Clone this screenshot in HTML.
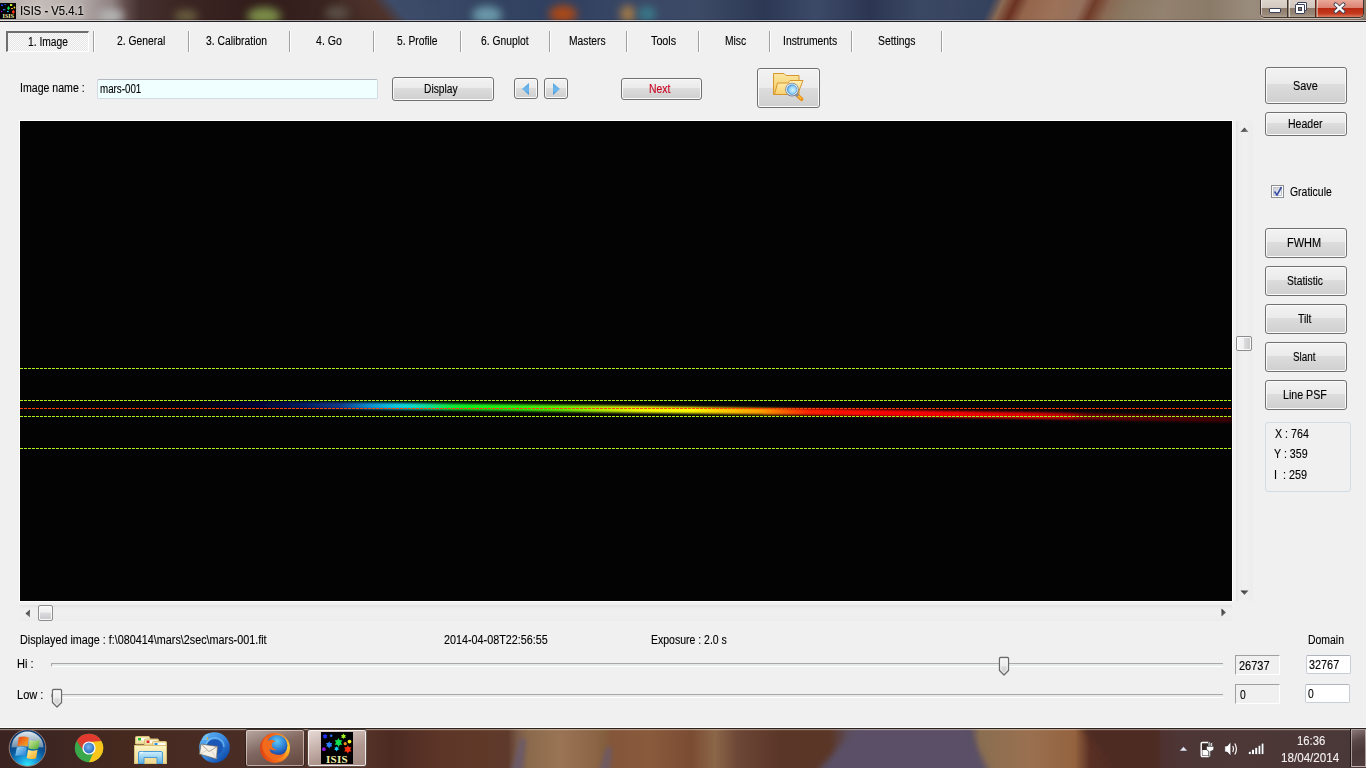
<!DOCTYPE html>
<html><head><meta charset="utf-8"><style>
*{margin:0;padding:0;box-sizing:border-box}
html,body{width:1366px;height:768px;overflow:hidden}
body{background:#f0f0f0;position:relative;font-family:"Liberation Sans",sans-serif;font-size:11.5px;color:#000}
.a{position:absolute}
.t{position:absolute;white-space:nowrap;line-height:14px;transform-origin:0 0;-webkit-text-stroke:0.12px currentColor}
.btn{position:absolute;border:1px solid #707070;border-radius:3px;background:linear-gradient(#f2f2f2 0%,#ebebeb 45%,#dddddd 45%,#cfcfcf 100%);box-shadow:inset 0 0 0 1px #fbfbfb}
.sep{position:absolute;top:31px;width:2px;height:21px;border-left:1px solid #a0a0a0;border-right:1px solid #fff}
.dash{position:absolute;left:20px;width:1212px;height:1px}
.g{background:repeating-linear-gradient(90deg,#a8f020 0,#a8f020 3px,transparent 3px,transparent 4px)}
.r{background:repeating-linear-gradient(90deg,#ff4500 0,#ff4500 3px,transparent 3px,transparent 4px)}
.blob{position:absolute;border-radius:50%;filter:blur(4px)}
</style></head><body>

<!-- ===== title bar ===== -->
<div class="a" style="left:0;top:0;width:1366px;height:21px;overflow:hidden;background:linear-gradient(90deg,#b4aca8 0px,#c4bcb8 40px,#b4acaa 80px,#8e8080 112px,#604c4a 126px,#44302e 140px,#3c2624 180px,#301c1a 260px,#3a2420 330px,#50342c 375px,#503a3e 392px,#3c4c6a 405px,#344462 480px,#304060 560px,#3a4866 640px,#3c4a66 700px,#2c3854 765px,#3c4a68 815px,#2c3652 870px,#3a4864 920px,#34425e 985px,#6a5a5c 998px,#7a4a38 1010px,#6a3222 1022px,#8a5a42 1040px,#9a7458 1070px,#8c7462 1095px,#6a3a2a 1105px,#8a6450 1120px,#958270 1160px,#8a7a68 1210px,#9a8c7c 1250px,#8a7868 1366px)">
  <div class="a" style="left:940px;top:0;width:220px;height:21px;transform:skewX(-25deg);transform-origin:0 100%;background:linear-gradient(90deg,#3a4662 0px,#34425e 42px,#5a5258 48px,#8a6a54 54px,#7c4a36 61px,#6a3222 67px,#7c4a36 73px,#94664c 80px,#9c7258 110px,#94705c 134px,#703c2a 146px,#7a4c38 152px,#8a6a54 162px,#8a7862 180px,#928270 220px)"></div>
  <div class="a" style="left:340px;top:0;width:100px;height:21px;background:linear-gradient(50deg,#3d2722 0%,#4e332b 42%,#3e4c6a 58%,#384864 100%)"></div>
  <div class="blob" style="left:98px;top:9px;width:26px;height:14px;background:#b4b4b4"></div>
  <div class="blob" style="left:174px;top:10px;width:24px;height:12px;background:#6a6040"></div>
  <div class="blob" style="left:247px;top:7px;width:34px;height:18px;background:#7a8c48"></div>
  <div class="blob" style="left:325px;top:6px;width:24px;height:14px;background:#5a5048"></div>
  <div class="blob" style="left:472px;top:6px;width:30px;height:18px;background:#6a98a8"></div>
  <div class="blob" style="left:549px;top:5px;width:28px;height:18px;background:#a84818"></div>
  <div class="blob" style="left:620px;top:5px;width:16px;height:18px;background:#a07848"></div>
  <div class="blob" style="left:638px;top:6px;width:18px;height:16px;background:#3a7888"></div>
</div>
<div class="a" style="left:0;top:19px;width:1366px;height:1px;background:rgba(0,0,10,.12)"></div>
<div class="a" style="left:0;top:20px;width:1366px;height:1px;background:rgba(255,255,255,.6)"></div>
<div class="a" style="left:0;top:21px;width:1366px;height:1px;background:#1e1e24"></div>
<!-- app icon -->
<svg class="a" style="left:0;top:3px" width="16" height="16" viewBox="0 0 16 16">
  <rect width="16" height="16" fill="#000"/>
  <ellipse cx="2" cy="2.2" rx="1.2" ry="1" fill="#1a3cf0"/>
  <ellipse cx="5.2" cy="1.6" rx="1" ry=".7" fill="#1a60e8"/>
  <rect x="10" y="1" width="2.2" height="2" fill="#c8f030"/>
  <path d="M8.5 3 L10 5.2 L8.5 7.3 L7 5.2 Z" fill="#10e050"/>
  <circle cx="14.4" cy="4.5" r=".9" fill="#f0e020"/>
  <rect x="11" y="5" width="2" height="1.1" fill="#f0a030"/>
  <rect x="3" y="6" width="2.2" height="1.2" fill="#2a80f0"/>
  <circle cx="1.6" cy="8.5" r=".8" fill="#a010e0"/>
  <ellipse cx="7.9" cy="8.5" rx="1" ry=".8" fill="#10c8f0"/>
  <path d="M13.3 6.7 L15 9 L13.3 11 L11.6 9 Z" fill="#ff3818"/>
  <text x="2.6" y="15.2" font-family="Liberation Serif" font-weight="bold" font-size="6" fill="#f8f0a8" textLength="11.5" lengthAdjust="spacingAndGlyphs">ISIS</text>
</svg>
<!-- window controls -->
<div class="a" style="left:1260px;top:0;width:104px;height:18px;border:1px solid #40342e;border-top:none;border-radius:0 0 5px 5px;overflow:hidden;box-shadow:0 1px 0 rgba(255,255,255,.45)">
  <div class="a" style="left:0;top:0;width:27px;height:17px;background:linear-gradient(#ddd4cc 0,#d2c8be 48%,#8e7c6c 50%,#9a8a7a 85%,#b0a294 100%);border-right:1px solid #40342e;box-shadow:inset 1px 0 0 rgba(255,255,255,.55)"></div>
  <div class="a" style="left:28px;top:0;width:27px;height:17px;background:linear-gradient(#dad0c8 0,#cfc4ba 48%,#8c7a6a 50%,#988878 85%,#aea092 100%);border-right:1px solid #6a1e12;box-shadow:inset 1px 0 0 rgba(255,255,255,.55)"></div>
  <div class="a" style="left:56px;top:0;width:48px;height:17px;background:linear-gradient(#eaa898 0,#dc8070 48%,#b82a12 50%,#c43a1e 80%,#d87a60 100%);box-shadow:inset 1px 0 0 rgba(255,255,255,.45)"></div>
  <div class="a" style="left:8px;top:8px;width:12px;height:5px;background:#fff;border:1px solid #3a4058;border-radius:1px"></div>
  <div class="a" style="left:36px;top:2px;width:10px;height:9px;background:#fff;border:1px solid #3a4058;border-radius:1px"></div>
  <div class="a" style="left:34px;top:4px;width:10px;height:10px;background:#fff;border:1px solid #3a4058;border-radius:1px"></div>
  <div class="a" style="left:37px;top:7px;width:4px;height:4px;background:#8a7868;border:1px solid #3a4058"></div>
  <svg class="a" style="left:72px;top:2px" width="13" height="12" viewBox="0 0 13 12"><path d="M2.6 2.4 L10.4 9.6 M10.4 2.4 L2.6 9.6" stroke="#3a4058" stroke-width="4" stroke-linecap="round"/><path d="M2.6 2.4 L10.4 9.6 M10.4 2.4 L2.6 9.6" stroke="#fff" stroke-width="2.2" stroke-linecap="round"/></svg>
</div>

<!-- ===== tabs ===== -->
<div class="a" style="left:6px;top:31px;width:83px;height:21px;border-top:2px solid #6e6e6e;border-left:2px solid #6e6e6e;border-right:1px solid #fff;border-bottom:1px solid #fff;background:repeating-conic-gradient(#fafafa 0 25%,#e6e6e6 0 50%) 0 0/2px 2px"></div>
<div class="sep" style="left:93px"></div>
<div class="sep" style="left:188px"></div>
<div class="sep" style="left:289px"></div>
<div class="sep" style="left:373px"></div>
<div class="sep" style="left:460px"></div>
<div class="sep" style="left:549px"></div>
<div class="sep" style="left:626px"></div>
<div class="sep" style="left:698px"></div>
<div class="sep" style="left:769px"></div>
<div class="sep" style="left:851px"></div>
<div class="sep" style="left:941px"></div>

<!-- ===== image name row ===== -->
<div class="a" style="left:97px;top:79px;width:281px;height:20px;border:1px solid #d2dae2;border-top-color:#b4b8c0;border-radius:2px;background:#f0ffff"></div>
<div class="btn" style="left:392px;top:77px;width:102px;height:24px"></div>
<div class="btn" style="left:514px;top:78px;width:24px;height:21px"></div>
<svg class="a" style="left:520px;top:82px" width="12" height="14" viewBox="0 0 12 14"><defs><linearGradient id="ag" x1="0" y1="0" x2="0" y2="1"><stop offset="0" stop-color="#58a8e0"/><stop offset=".6" stop-color="#70b8ec"/><stop offset="1" stop-color="#3a90d4"/></linearGradient></defs><path d="M9 1 L9 13 L2 7 Z" fill="url(#ag)"/></svg>
<div class="btn" style="left:544px;top:78px;width:24px;height:21px"></div>
<svg class="a" style="left:550px;top:82px" width="12" height="14" viewBox="0 0 12 14"><path d="M3 1 L3 13 L10 7 Z" fill="url(#ag)"/></svg>
<div class="btn" style="left:621px;top:78px;width:81px;height:22px"></div>
<div class="btn" style="left:757px;top:68px;width:63px;height:40px;background:linear-gradient(#f2f2f2 0%,#ebebeb 50%,#dddddd 50%,#cfcfcf 100%)"></div>
<!-- folder search icon -->
<svg class="a" style="left:771px;top:72px" width="36" height="32" viewBox="0 0 36 32">
  <defs>
    <linearGradient id="fb" x1="0" y1="0" x2="0" y2="1"><stop offset="0" stop-color="#fbe6a0"/><stop offset="1" stop-color="#f2c862"/></linearGradient>
    <linearGradient id="ff" x1="0" y1="0" x2="0" y2="1"><stop offset="0" stop-color="#fff2b8"/><stop offset="1" stop-color="#f8d070"/></linearGradient>
    <radialGradient id="lens" cx=".6" cy=".55" r=".65"><stop offset="0" stop-color="#d0f4ff"/><stop offset=".55" stop-color="#98d4f4"/><stop offset="1" stop-color="#3a8ee0"/></radialGradient>
  </defs>
  <path d="M2.5 22.5 L2.5 1.5 L13 1.5 L15 3.5 L28 3.5 L28 22.5 Z" fill="url(#fb)" stroke="#d8962c"/>
  <path d="M3.5 22.5 L6.5 11 L17 11 L19 8.5 L32 8.5 L26.5 22.5 Z" fill="url(#ff)" stroke="#d8962c"/>
  <path d="M26.5 23.5 L30.5 27.2" stroke="#e89018" stroke-width="3.8" stroke-linecap="round"/>
  <path d="M27.5 24.2 L30 26.5" stroke="#ffc040" stroke-width="1.4" stroke-linecap="round"/>
  <path d="M24.5 21.5 L27 24" stroke="#8a909a" stroke-width="3.2"/>
  <circle cx="21" cy="17.6" r="6.8" fill="#7a8292"/>
  <circle cx="21" cy="17.6" r="6" fill="#eef2f6"/>
  <circle cx="21" cy="17.6" r="4.8" fill="url(#lens)" stroke="#4a90d8" stroke-width=".7"/>
</svg>

<!-- ===== right column ===== -->
<div class="btn" style="left:1265px;top:67px;width:82px;height:37px"></div>
<div class="btn" style="left:1265px;top:112px;width:82px;height:24px"></div>
<div class="a" style="left:1271px;top:185px;width:13px;height:13px;border:1px solid #8e8f8f;background:#fff">
  <div class="a" style="left:1px;top:1px;width:9px;height:9px;border:1px solid #c0c4cc;background:linear-gradient(135deg,#cbcfd5,#f6f6f6)"></div>
  <svg class="a" style="left:1px;top:0" width="10" height="11" viewBox="0 0 10 11"><path d="M1.5 5.5 L4 9 L8.5 1" fill="none" stroke="#3a4ea8" stroke-width="1.6"/></svg>
</div>
<div class="btn" style="left:1265px;top:228px;width:82px;height:30px"></div>
<div class="btn" style="left:1265px;top:266px;width:82px;height:30px"></div>
<div class="btn" style="left:1265px;top:304px;width:82px;height:30px"></div>
<div class="btn" style="left:1265px;top:342px;width:82px;height:30px"></div>
<div class="btn" style="left:1265px;top:380px;width:82px;height:30px"></div>
<div class="a" style="left:1265px;top:422px;width:86px;height:70px;border:1px solid #d0dce6;border-radius:3px"></div>

<!-- ===== image area ===== -->
<div class="a" style="left:19px;top:120px;width:1214px;height:482px;background:#fff"></div>
<div class="a" id="img" style="left:20px;top:121px;width:1212px;height:480px;background:#030303;overflow:hidden">
  <svg width="1212" height="480" style="position:absolute;left:0;top:0">
    <defs>
      <linearGradient id="spec" x1="0" y1="0" x2="1212" y2="0" gradientUnits="userSpaceOnUse"><stop offset="0.1485" stop-color="#000010"/><stop offset="0.1815" stop-color="#000030"/><stop offset="0.2145" stop-color="#000a48"/><stop offset="0.2640" stop-color="#0a3a88"/><stop offset="0.2888" stop-color="#1090d0"/><stop offset="0.3094" stop-color="#10c8e0"/><stop offset="0.3218" stop-color="#10d8d0"/><stop offset="0.3383" stop-color="#10e090"/><stop offset="0.3548" stop-color="#10ec40"/><stop offset="0.3713" stop-color="#10f020"/><stop offset="0.4125" stop-color="#30f010"/><stop offset="0.4455" stop-color="#60f000"/><stop offset="0.4785" stop-color="#b0f000"/><stop offset="0.5116" stop-color="#f0fc00"/><stop offset="0.5528" stop-color="#ffff00"/><stop offset="0.5776" stop-color="#ffd000"/><stop offset="0.6106" stop-color="#ffa000"/><stop offset="0.6353" stop-color="#ff5000"/><stop offset="0.6518" stop-color="#ff2000"/><stop offset="0.6848" stop-color="#ff0800"/><stop offset="0.7756" stop-color="#f00000"/><stop offset="0.8416" stop-color="#d40000"/><stop offset="0.8663" stop-color="#b40000"/><stop offset="0.8787" stop-color="#700000"/><stop offset="0.9323" stop-color="#520000"/><stop offset="1.0000" stop-color="#380000"/></linearGradient>
      <filter id="bl" x="-1%" y="-200%" width="102%" height="500%"><feGaussianBlur stdDeviation="2 1.3"/></filter>
    </defs>
    <polygon points="150.0,279.47 280.0,280.83 380.0,281.98 480.0,283.21 580.0,284.54 680.0,285.94 780.0,287.44 880.0,289.02 980.0,290.69 1080.0,292.44 1212.0,294.89 1212.0,301.49 1080.0,299.04 980.0,297.29 880.0,295.62 780.0,294.04 680.0,292.54 580.0,291.14 480.0,289.81 380.0,288.58 280.0,287.43 150.0,286.07" fill="url(#spec)" filter="url(#bl)"/>
  </svg>
</div>
<div class="dash g" style="top:368px"></div>
<div class="dash g" style="top:400px"></div>
<div class="dash r" style="top:408px"></div>
<div class="dash g" style="top:416px"></div>
<div class="dash g" style="top:448px"></div>

<!-- vertical scrollbar -->
<div class="a" style="left:1236px;top:121px;width:17px;height:480px;background:linear-gradient(90deg,#e2e2e2 0,#ededed 3px,#f0f0f0 8px,#ededed 16px)"></div>
<svg class="a" style="left:1240px;top:127px" width="9" height="6" viewBox="0 0 9 6"><defs><linearGradient id="ar" x1="0" y1="0" x2="1" y2="1"><stop offset="0" stop-color="#202020"/><stop offset="1" stop-color="#909090"/></linearGradient></defs><path d="M4.5 0.5 L8.5 5 L0.5 5 Z" fill="url(#ar)"/></svg>
<svg class="a" style="left:1240px;top:590px" width="9" height="6" viewBox="0 0 9 6"><path d="M0.5 0.5 L8.5 0.5 L4.5 5 Z" fill="url(#ar)"/></svg>
<div class="a" style="left:1236px;top:336px;width:16px;height:15px;border:1px solid #8c8c8c;border-radius:2px;background:linear-gradient(90deg,#f6f6f6 0,#f0f0f0 50%,#dcdcde 52%,#c8c8cc 100%);box-shadow:inset 0 0 0 1px #fafafa"></div>

<!-- horizontal scrollbar -->
<div class="a" style="left:20px;top:605px;width:1212px;height:16px;background:linear-gradient(#e2e2e2 0,#ededed 3px,#f0f0f0 8px,#ededed 15px)"></div>
<svg class="a" style="left:25px;top:609px" width="6" height="9" viewBox="0 0 6 9"><path d="M0.5 4.5 L5 0.5 L5 8.5 Z" fill="url(#ar)"/></svg>
<svg class="a" style="left:1221px;top:608px" width="6" height="9" viewBox="0 0 6 9"><path d="M0.5 0.5 L5 4.5 L0.5 8.5 Z" fill="url(#ar)"/></svg>
<div class="a" style="left:38px;top:605px;width:15px;height:16px;border:1px solid #8c8c8c;border-radius:2px;background:linear-gradient(#f6f6f6 0,#f0f0f0 45%,#dcdcde 48%,#c8c8cc 100%);box-shadow:inset 0 0 0 1px #fafafa"></div>

<!-- ===== bottom ===== -->
<!-- hi slider -->
<div class="a" style="left:51px;top:663px;width:1172px;height:4px;border-top:1px solid #a8a8a8;border-left:1px solid #a8a8a8;border-bottom:1px solid #fff;background:#e6eaea"></div>
<svg class="a" style="left:998px;top:656px" width="12" height="21" viewBox="0 0 12 21"><defs><linearGradient id="th" x1="0" y1="0" x2="0" y2="1"><stop offset="0" stop-color="#f4f4f4"/><stop offset=".5" stop-color="#ececec"/><stop offset=".52" stop-color="#dadada"/><stop offset="1" stop-color="#d0d0d0"/></linearGradient></defs><path d="M2.5 1.5 Q1.5 1.5 1.5 2.5 L1.5 14.5 L6 19 L10.5 14.5 L10.5 2.5 Q10.5 1.5 9.5 1.5 Z" fill="url(#th)" stroke="#6a6a6a" stroke-width="1.3" stroke-linejoin="round"/><path d="M2.8 2.8 L9.2 2.8 L9.2 14 L6 17.2 L2.8 14 Z" fill="none" stroke="#fff" stroke-width="0.8" opacity=".9"/></svg>
<!-- low slider -->
<div class="a" style="left:51px;top:694px;width:1172px;height:4px;border-top:1px solid #a8a8a8;border-left:1px solid #a8a8a8;border-bottom:1px solid #fff;background:#e6eaea"></div>
<svg class="a" style="left:51px;top:688px" width="12" height="21" viewBox="0 0 12 21"><path d="M2.5 1.5 Q1.5 1.5 1.5 2.5 L1.5 14.5 L6 19 L10.5 14.5 L10.5 2.5 Q10.5 1.5 9.5 1.5 Z" fill="url(#th)" stroke="#6a6a6a" stroke-width="1.3" stroke-linejoin="round"/><path d="M2.8 2.8 L9.2 2.8 L9.2 14 L6 17.2 L2.8 14 Z" fill="none" stroke="#fff" stroke-width="0.8" opacity=".9"/></svg>
<!-- value boxes -->
<div class="a" style="left:1235px;top:655px;width:45px;height:20px;border-top:1px solid #a0a0a0;border-left:1px solid #a0a0a0;border-right:1px solid #fff;border-bottom:1px solid #fff;background:#f0f0f0"></div>
<div class="a" style="left:1306px;top:655px;width:45px;height:19px;border:1px solid #c8ccd4;border-top-color:#b0b4bc;border-radius:2px;background:#fff"></div>
<div class="a" style="left:1235px;top:684px;width:45px;height:20px;border-top:1px solid #a0a0a0;border-left:1px solid #a0a0a0;border-right:1px solid #fff;border-bottom:1px solid #fff;background:#f0f0f0"></div>
<div class="a" style="left:1305px;top:684px;width:45px;height:19px;border:1px solid #c8ccd4;border-top-color:#b0b4bc;border-radius:2px;background:#fff"></div>

<!-- ===== taskbar ===== -->
<div class="a" style="left:0;top:727px;width:1366px;height:1px;background:#fcfcfc"></div>
<div class="a" style="left:0;top:728px;width:1366px;height:1px;background:#2a2420"></div>
<div class="a" id="tb" style="left:0;top:729px;width:1366px;height:39px;overflow:hidden;background:linear-gradient(90deg,#3a2320 0px,#3e2622 60px,#45291f 120px,#4a2e26 250px,#573428 360px,#4c2a22 392px,#5e3628 442px,#603828 480px,#5e3a2c 508px,#7a5a48 518px,#8a6a4c 528px,#9a7454 560px,#8a6444 597px,#84603e 604px,#84563a 612px,#8a5a3c 650px,#7a4c32 691px,#8c6648 715px,#6c4636 738px,#5a3628 780px,#5a3626 830px,#5c4c5a 848px,#5e5468 870px,#5e5468 940px,#544a62 968px,#8a6e50 980px,#9a7050 1030px,#94623e 1075px,#5a3024 1090px,#4a2a22 1125px,#4e3636 1180px,#4a3838 1366px)">
  <svg class="a" style="left:760px;top:0" width="400" height="39" viewBox="0 0 400 39"><defs><filter id="tkb" x="-10%" y="-20%" width="120%" height="140%"><feGaussianBlur stdDeviation="3"/></filter></defs>
    <polygon points="101,-6 205,-6 230,45 55,45" fill="#5a5066" filter="url(#tkb)"/>
    <polygon points="318,-6 400,-6 400,45 360,45" fill="#4e2c24" filter="url(#tkb)"/>
  </svg>
  <svg class="a" style="left:480px;top:0" width="160" height="39" viewBox="0 0 160 39"><defs><filter id="tkc" x="-20%" y="-20%" width="140%" height="140%"><feGaussianBlur stdDeviation="2"/></filter></defs>
    <polygon points="40,10 46,10 42,45 30,45" fill="#6a5a6a" filter="url(#tkc)" opacity=".9"/>
    <polygon points="126,18 132,18 130,45 118,45" fill="#6a5a6a" filter="url(#tkc)" opacity=".8"/>
  </svg>
  <div class="a" style="left:0;top:0;width:1366px;height:1px;background:rgba(255,240,225,.45)"></div>
  <div class="a" style="left:0;top:1px;width:1366px;height:1px;background:rgba(255,240,225,.08)"></div>
</div>
<!-- start orb -->
<svg class="a" style="left:8px;top:729px" width="39" height="38" viewBox="0 0 39 38">
  <defs>
    <radialGradient id="orbb" cx=".5" cy=".98" r=".75"><stop offset="0" stop-color="#30ecff"/><stop offset=".35" stop-color="#1a9ad8"/><stop offset=".7" stop-color="#0a5a9c"/><stop offset="1" stop-color="#083c78"/></radialGradient>
    <linearGradient id="orbt" x1="0" y1="0" x2="0" y2="1"><stop offset="0" stop-color="#e0e8ee"/><stop offset=".5" stop-color="#a8bccc"/><stop offset="1" stop-color="#6a8cac"/></linearGradient>
    <linearGradient id="pO" x1="0" y1="0" x2="1" y2="1"><stop offset="0" stop-color="#e8401a"/><stop offset="1" stop-color="#f8b020"/></linearGradient>
    <linearGradient id="pG" x1="0" y1="0" x2="1" y2="1"><stop offset="0" stop-color="#d8f0a0"/><stop offset="1" stop-color="#4aa830"/></linearGradient>
    <linearGradient id="pB" x1="0" y1="0" x2="1" y2="1"><stop offset="0" stop-color="#a8dcf8"/><stop offset="1" stop-color="#1a7ad0"/></linearGradient>
    <linearGradient id="pY" x1="0" y1="0" x2="1" y2="1"><stop offset="0" stop-color="#fff0a0"/><stop offset="1" stop-color="#f8a818"/></linearGradient>
  </defs>
  <circle cx="19.5" cy="19" r="18.3" fill="url(#orbb)" stroke="#9a7a70" stroke-width="1"/>
  <path d="M3.5 18.5 A16 16 0 0 1 35.5 18.5 Q19.5 17 3.5 18.5 Z" fill="url(#orbt)"/>
  <g transform="translate(0.3,1.8)"><path d="M10.5 6.5 Q15.5 4.8 20.5 7 L19 15.8 Q14 13.8 9 15.3 Z" fill="url(#pO)"/>
  <path d="M21.5 9.2 Q26.5 11 31.5 9 L30 17.6 Q25 19.4 20 17.4 Z" fill="url(#pG)"/>
  <path d="M8.5 16.6 Q13.5 15 18.5 17 L17.2 25.6 Q12.2 23.6 7 25.2 Z" fill="url(#pB)"/>
  <path d="M19.8 19 Q24.5 20.8 29.2 19 L27.8 27.4 Q23 29.2 18.4 27.2 Z" fill="url(#pY)"/></g>
</svg>
<!-- chrome -->
<svg class="a" style="left:74px;top:733px" width="30" height="30" viewBox="0 0 30 30">
  <defs>
    <radialGradient id="cb" cx=".45" cy=".4" r=".6"><stop offset="0" stop-color="#7ab8f0"/><stop offset="1" stop-color="#2a6cc0"/></radialGradient>
  </defs>
  <circle cx="15" cy="15" r="14.2" fill="#3aa84a"/>
  <path d="M15 15 L2.7 7.9 A14.2 14.2 0 0 1 27.3 7.9 Z" fill="#e23a2e"/>
  <path d="M15 15 L27.3 7.9 A14.2 14.2 0 0 1 15 29.2 Z" fill="#f8c61a"/>
  <path d="M15 9 L27.3 7.9 L21 13 Z" fill="#f8c61a"/>
  <path d="M9.8 18 L2.7 7.9 L9 12 Z" fill="#e23a2e"/>
  <path d="M20.2 18 L15 29.2 L14 21 Z" fill="#3aa84a"/>
  <circle cx="15" cy="15" r="6.6" fill="#fff"/>
  <circle cx="15" cy="15" r="5.4" fill="url(#cb)"/>
</svg>
<!-- folder -->
<svg class="a" style="left:134px;top:735px" width="34" height="30" viewBox="0 0 34 30">
  <defs>
    <linearGradient id="fdb" x1="0" y1="0" x2="0" y2="1"><stop offset="0" stop-color="#fcf4c4"/><stop offset="1" stop-color="#eed890"/></linearGradient>
    <linearGradient id="fst" x1="0" y1="0" x2="0" y2="1"><stop offset="0" stop-color="#d0f0ff"/><stop offset="1" stop-color="#5ab0e0"/></linearGradient>
  </defs>
  <path d="M1.5 9 L1.5 2.5 Q1.5 1.5 2.5 1.5 L15 1.5 L16 3.5 L16 9 Z" fill="#f2e2a4" stroke="#d6c078"/>
  <rect x="3.5" y="3" width="11" height="2.5" fill="#fff"/><rect x="4" y="3" width="3" height="2.5" fill="#20c030"/>
  <path d="M10.5 10 L10.5 5 Q10.5 4 11.5 4 L24 4 L25 6 L25 10 Z" fill="#f2e2a4" stroke="#d6c078"/>
  <rect x="12" y="5.5" width="11" height="2.5" fill="#fff"/><rect x="12.5" y="5.5" width="3" height="2.5" fill="#e02a20"/>
  <path d="M18.5 11 L18.5 7.5 Q18.5 6.5 19.5 6.5 L31.5 6.5 Q32.5 6.5 32.5 7.5 L32.5 11 Z" fill="#f2e2a4" stroke="#d6c078"/>
  <rect x="20" y="8" width="11" height="2.5" fill="#fff"/><rect x="20.5" y="8" width="3" height="2.5" fill="#2a90e8"/>
  <rect x="0.5" y="10.5" width="32" height="18" fill="url(#fdb)" stroke="#d6c078"/>
  <path d="M4.5 28.5 L4.5 18 Q4.5 16.5 6 16.5 L27 16.5 Q28.5 16.5 28.5 18 L28.5 28.5 L23 28.5 L23 22.5 L10 22.5 L10 28.5 Z" fill="url(#fst)" stroke="#4a9ad8"/>
  <path d="M6 18 L9 17" stroke="#fff" stroke-width="1.2"/>
</svg>
<!-- thunderbird -->
<svg class="a" style="left:197px;top:731px" width="34" height="34" viewBox="0 0 34 34">
  <defs>
    <linearGradient id="tbr" x1="0" y1="0" x2="1" y2="1"><stop offset="0" stop-color="#5ab0f0"/><stop offset=".5" stop-color="#3a88e0"/><stop offset="1" stop-color="#0a48a8"/></linearGradient>
  </defs>
  <circle cx="17.5" cy="16.5" r="11.8" fill="#1a58b8" stroke="url(#tbr)" stroke-width="7"/>
  <path d="M9 13 Q12 6 20 7 Q27 9 27 16" fill="none" stroke="#8ad0fa" stroke-width="1.2" opacity=".7"/>
  <path d="M5 9 Q6 3 12 2.5 Q10 6 11 9 Z" fill="#70c0f8"/>
  <circle cx="10.5" cy="7.5" r=".9" fill="#f0a020"/>
  <path d="M4 13 L20.5 15.5 L19.5 28 L2.5 23 Z" fill="#f4f0e6" stroke="#6a6458" stroke-width=".7"/>
  <path d="M4 13 L12 20.5 L20.5 15.5" fill="none" stroke="#9a9486" stroke-width=".8"/>
  <path d="M2.5 23 L10.5 19 M19.5 28 L14.5 19.5" fill="none" stroke="#c8c2b4" stroke-width=".6"/>
</svg>
<!-- firefox button -->
<div class="a" style="left:245px;top:729px;width:60px;height:38px;border:1px solid rgba(20,10,8,.7);border-radius:3px;background:linear-gradient(160deg,rgba(255,245,240,.62) 0,rgba(255,240,235,.3) 45%,rgba(255,255,255,.1) 100%);box-shadow:inset 0 0 0 1px rgba(255,235,225,.55)"></div>
<svg class="a" style="left:259px;top:732px" width="32" height="32" viewBox="0 0 32 32">
  <defs>
    <radialGradient id="ffo" cx=".85" cy=".45" r=".9"><stop offset="0" stop-color="#ffe030"/><stop offset=".3" stop-color="#ffa020"/><stop offset=".7" stop-color="#f06018"/><stop offset="1" stop-color="#d83a10"/></radialGradient>
    <radialGradient id="ffb" cx=".5" cy=".3" r=".7"><stop offset="0" stop-color="#60c8f8"/><stop offset=".6" stop-color="#2a7ad0"/><stop offset="1" stop-color="#1a3a98"/></radialGradient>
  </defs>
  <circle cx="16" cy="16" r="15" fill="url(#ffo)"/>
  <circle cx="18" cy="13.5" r="10.5" fill="url(#ffb)"/>
  <path d="M3 14 Q5 26 16 27 Q25 27 28 18 Q26 24 17 22.5 Q11 21.5 10.5 17 Q14 19 18 18 Q12 16 13 12 Q14 9 17 10 Q13 6 9 9 L8 4 Q4 7 3 14 Z" fill="#f26a1c"/>
</svg>
<!-- isis button -->
<div class="a" style="left:307px;top:729px;width:60px;height:38px;border:1px solid rgba(20,10,8,.6);border-radius:3px;background:linear-gradient(160deg,#e8dcd8 0,#c8b4ae 35%,#b09890 60%,#a08880 100%);box-shadow:inset 0 0 0 1px rgba(255,248,245,.85)"></div>
<svg class="a" style="left:321px;top:732px" width="32" height="32" viewBox="0 0 32 32">
  <rect width="32" height="32" fill="#000"/>
  <polygon points="4.10,1.60 6.52,5.80 1.68,5.80" fill="#2030f0"/><polygon points="6.52,3.00 4.10,7.20 1.68,3.00" fill="#2030f0"/><circle cx="10.2" cy="3.7" r="1.3" fill="#2a70f0"/><polygon points="22.50,1.50 24.92,5.70 20.08,5.70" fill="#a0f020"/><polygon points="24.92,2.90 22.50,7.10 20.08,2.90" fill="#a0f020"/><polygon points="17.50,6.10 21.31,12.70 13.69,12.70" fill="#10e050"/><polygon points="21.31,8.30 17.50,14.90 13.69,8.30" fill="#10e050"/><circle cx="28.5" cy="9.6" r="1.9" fill="#f0f020"/><circle cx="24.2" cy="11.7" r="1.6" fill="#f09020"/><polygon points="8.20,9.20 11.32,14.60 5.08,14.60" fill="#2a80ff"/><polygon points="11.32,11.00 8.20,16.40 5.08,11.00" fill="#2a80ff"/><polygon points="15.60,14.20 17.85,18.10 13.35,18.10" fill="#10d0f8"/><polygon points="17.85,15.50 15.60,19.40 13.35,15.50" fill="#10d0f8"/><polygon points="26.80,13.20 30.44,19.50 23.16,19.50" fill="#ff3010"/><polygon points="30.44,15.30 26.80,21.60 23.16,15.30" fill="#ff3010"/><circle cx="2.9" cy="17.2" r="1.9" fill="#9010e0"/>
  <text x="16" y="30.5" text-anchor="middle" font-family="Liberation Serif" font-weight="bold" font-size="11" fill="#f0f0a8" letter-spacing="0.3">ISIS</text>
</svg>
<!-- tray -->
<svg class="a" style="left:1179px;top:746px" width="9" height="6" viewBox="0 0 9 6"><path d="M4.5 0.6 L8.5 5 L0.5 5 Z" fill="#e8e8f4" stroke="#3a3038" stroke-width=".5"/></svg>
<svg class="a" style="left:1200px;top:741px" width="16" height="17" viewBox="0 0 16 17">
  <rect x="1.2" y="1.5" width="8.6" height="14" rx="1.2" fill="#3a2a2a" stroke="#fff" stroke-width="1.4"/>
  <rect x="2.4" y="9" width="6.2" height="5.3" fill="#fff"/>
  <path d="M6.5 5.2 L13.8 5.2 L13.8 7.2 Q13.8 10 10.5 10.3 L10.5 16 L9 16 L9 10.3 Q6.5 10 6.5 7.2 Z" fill="#fff" stroke="#222" stroke-width=".6"/>
  <rect x="8.3" y="1" width="1.3" height="4.2" fill="#fff" stroke="#222" stroke-width=".4"/>
  <rect x="11" y="1" width="1.3" height="4.2" fill="#fff" stroke="#222" stroke-width=".4"/>
</svg>
<svg class="a" style="left:1224px;top:741px" width="15" height="16" viewBox="0 0 15 16">
  <path d="M0.8 5 L3.2 5 L6.8 0.8 L6.8 15 L3.2 11 L0.8 11 Z" fill="#fff" stroke="#2a2226" stroke-width=".6"/>
  <path d="M8.8 5 Q10.3 8 8.8 11" fill="none" stroke="#fff" stroke-width="1.2"/>
  <path d="M10.8 2.5 Q14 8 10.8 13.5" fill="none" stroke="#fff" stroke-width="1.2"/>
</svg>
<svg class="a" style="left:1248px;top:742px" width="17" height="14" viewBox="0 0 17 14">
  <rect x=".6" y="9.6" width="2.4" height="2.6" fill="#fff" stroke="#2a2226" stroke-width=".4"/>
  <rect x="3.8" y="7.6" width="2.4" height="4.6" fill="#fff" stroke="#2a2226" stroke-width=".4"/>
  <rect x="7" y="5.7" width="2.4" height="6.5" fill="#fff" stroke="#2a2226" stroke-width=".4"/>
  <rect x="10.2" y="3.5" width="2.4" height="8.7" fill="#fff" stroke="#2a2226" stroke-width=".4"/>
  <rect x="13.4" y="1.2" width="2.4" height="11" fill="#fff" stroke="#2a2226" stroke-width=".4"/>
</svg>
<div class="a" style="left:1351px;top:729px;width:15px;height:38px;border:1px solid rgba(235,220,220,.6);box-shadow:-1px 0 0 #1e1414,1px 0 0 #1e1414;background:linear-gradient(160deg,#8a7676 0,#5a4848 30%,#4a3838 60%,#503c3e 100%)"></div>

<!-- TEXTS -->
<div class="t" style="left:19.96px;top:4px;font-size:12px;transform:scaleX(0.9373);text-shadow:0 0 6px #e4e0dc,0 0 3px #e4e0dc">ISIS - V5.4.1</div>
<div class="t" style="left:28.04px;top:35px;font-size:12px;transform:scaleX(0.8565)">1. Image</div>
<div class="t" style="left:117.0px;top:34px;font-size:12px;transform:scaleX(0.8625)">2. General</div>
<div class="t" style="left:205.8px;top:34px;font-size:12px;transform:scaleX(0.8629)">3. Calibration</div>
<div class="t" style="left:315.6px;top:34px;font-size:12px;transform:scaleX(0.8828)">4. Go</div>
<div class="t" style="left:397.0px;top:34px;font-size:12px;transform:scaleX(0.8553)">5. Profile</div>
<div class="t" style="left:481.0px;top:34px;font-size:12px;transform:scaleX(0.8589)">6. Gnuplot</div>
<div class="t" style="left:569.44px;top:34px;font-size:12px;transform:scaleX(0.8571)">Masters</div>
<div class="t" style="left:650.6px;top:34px;font-size:12px;transform:scaleX(0.8964)">Tools</div>
<div class="t" style="left:724.74px;top:34px;font-size:12px;transform:scaleX(0.8583)">Misc</div>
<div class="t" style="left:783.14px;top:34px;font-size:12px;transform:scaleX(0.8629)">Instruments</div>
<div class="t" style="left:878.2px;top:34px;font-size:12px;transform:scaleX(0.8651)">Settings</div>
<div class="t" style="left:20.32px;top:81px;font-size:12px;transform:scaleX(0.8819)">Image name :</div>
<div class="t" style="left:99.8px;top:82px;font-size:12px;transform:scaleX(0.8137)">mars-001</div>
<div class="t" style="left:424.45px;top:82px;font-size:12px;transform:scaleX(0.8513)">Display</div>
<div class="t" style="left:649.39px;top:82px;font-size:12px;transform:scaleX(0.8646);color:#c8001e">Next</div>
<div class="t" style="left:1293.1px;top:79px;font-size:12px;transform:scaleX(0.9074)">Save</div>
<div class="t" style="left:1287.52px;top:117px;font-size:12px;transform:scaleX(0.8795)">Header</div>
<div class="t" style="left:1289.6px;top:185px;font-size:12px;transform:scaleX(0.8698)">Graticule</div>
<div class="t" style="left:1287.39px;top:236px;font-size:12px;transform:scaleX(0.9139)">FWHM</div>
<div class="t" style="left:1287.4px;top:274px;font-size:12px;transform:scaleX(0.8571)">Statistic</div>
<div class="t" style="left:1298.2px;top:312px;font-size:12px;transform:scaleX(0.86)">Tilt</div>
<div class="t" style="left:1293.2px;top:350px;font-size:12px;transform:scaleX(0.8214)">Slant</div>
<div class="t" style="left:1283.41px;top:388px;font-size:12px;transform:scaleX(0.8875)">Line PSF</div>
<div class="t" style="left:1274.8px;top:427px;font-size:12px;transform:scaleX(0.8895)">X : 764</div>
<div class="t" style="left:1273.9px;top:447px;font-size:12px;transform:scaleX(0.8895)">Y : 359</div>
<div class="t" style="left:1274.3px;top:468px;font-size:12px;transform:scaleX(0.9028)">I&nbsp;&nbsp;: 259</div>
<div class="t" style="left:19.5px;top:633px;font-size:12px;transform:scaleX(0.8996)">Displayed image : f:\080414\mars\2sec\mars-001.fit</div>
<div class="t" style="left:443.6px;top:633px;font-size:12px;transform:scaleX(0.8983)">2014-04-08T22:56:55</div>
<div class="t" style="left:651.33px;top:633px;font-size:12px;transform:scaleX(0.8744)">Exposure : 2.0 s</div>
<div class="t" style="left:1307.53px;top:633px;font-size:12px;transform:scaleX(0.87)">Domain</div>
<div class="t" style="left:16.58px;top:657px;font-size:12px;transform:scaleX(0.92)">Hi :</div>
<div class="t" style="left:16.58px;top:688px;font-size:12px;transform:scaleX(0.9185)">Low :</div>
<div class="t" style="left:1238.85px;top:659px;font-size:12px;transform:scaleX(0.9167)">26737</div>
<div class="t" style="left:1309.15px;top:658px;font-size:12px;transform:scaleX(0.9045)">32767</div>
<div class="t" style="left:1239.5px;top:688px;font-size:12px;transform:scaleX(0.86)">0</div>
<div class="t" style="left:1308.45px;top:687px;font-size:12px;transform:scaleX(0.86)">0</div>
<div class="t" style="left:1296.9px;top:734px;font-size:12.5px;transform:scaleX(0.9);color:#f4f0f0">16:36</div>
<div class="t" style="left:1280.77px;top:751px;font-size:12.5px;transform:scaleX(0.9306);color:#f4f0f0">18/04/2014</div>
<!-- /TEXTS -->
</body></html>
